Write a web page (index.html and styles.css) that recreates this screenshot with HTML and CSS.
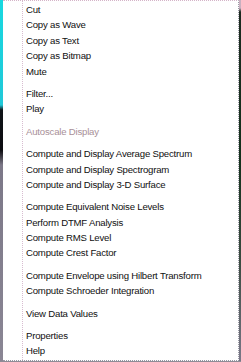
FILE: index.html
```html
<!DOCTYPE html>
<html>
<head>
  <title>Context Menu</title>
  <link rel="stylesheet" href="styles.css">
</head>
<body>
  <div class="screen">
    <div class="backdrop-left"></div>

    <ul class="menu">
      <li class="item">Cut</li>
      <li class="item">Copy as Wave</li>
      <li class="item">Copy as Text</li>
      <li class="item">Copy as Bitmap</li>
      <li class="item">Mute</li>
      <li class="separator"></li>
      <li class="item">Filter...</li>
      <li class="item">Play</li>
      <li class="separator"></li>
      <li class="item disabled">Autoscale Display</li>
      <li class="separator"></li>
      <li class="item">Compute and Display Average Spectrum</li>
      <li class="item">Compute and Display Spectrogram</li>
      <li class="item">Compute and Display 3-D Surface</li>
      <li class="separator"></li>
      <li class="item">Compute Equivalent Noise Levels</li>
      <li class="item">Perform DTMF Analysis</li>
      <li class="item">Compute RMS Level</li>
      <li class="item">Compute Crest Factor</li>
      <li class="separator"></li>
      <li class="item">Compute Envelope using Hilbert Transform</li>
      <li class="item">Compute Schroeder Integration</li>
      <li class="separator"></li>
      <li class="item">View Data Values</li>
      <li class="separator"></li>
      <li class="item">Properties</li>
      <li class="item">Help</li>
    </ul>

    <div class="backdrop-right"></div>
  </div>
</body>
</html>
```

FILE: styles.css
```css
body {
  margin: 0;
  background-color: #8e8c96;
  font-family: "Liberation Sans", Arial, sans-serif;
}

.screen {
  display: flex;
  height: 361px;
}

.backdrop-left {
  width: 3px;
  background: linear-gradient(to bottom, #18d8e0 0, #20c8d8 105px, #101418 110px, #0c0c10 150px, #7c7888 165px, #8a8694 100%);
}

.backdrop-right {
  width: 2px;
  background: linear-gradient(to bottom, #c8b0c0 0, #c8b0c0 8px, #1c2a20 12px, #14301c 160px, #3a4a40 260px, #7a7888 100%);
}

.menu {
  flex: 1;
  list-style: none;
  margin: 0;
  padding: 1px 0 0 0;
  background-color: #fff;
  border-top: 1px dotted #d4b4c8;
  border-right: 1px dotted #9a98a4;
  border-bottom: 1px dotted #9a98a4;
  position: relative;
}

/* icon gutter line */
.menu::before {
  content: "";
  position: absolute;
  top: 0;
  bottom: 0;
  left: 19px;
  border-left: 1px dotted #d8bcd0;
}

.item {
  height: 15.4px;
  line-height: 15.4px;
  padding-left: 23px;
  font-size: 9.6px;
  letter-spacing: -0.2px;
  color: #101010;
  white-space: nowrap;
}

.item.disabled {
  color: #a89098;
}

.separator {
  height: 7px;
}
```
